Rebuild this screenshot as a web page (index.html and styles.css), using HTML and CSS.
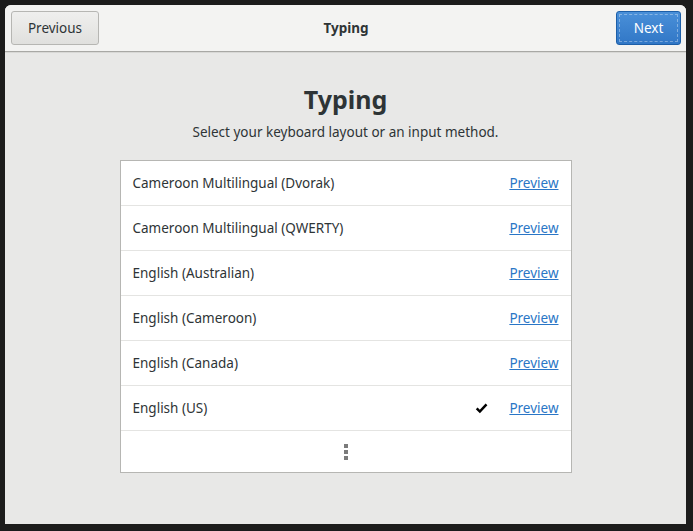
FILE: index.html
```html
<!DOCTYPE html>
<html>
<head>
<meta charset="utf-8">
<link rel="stylesheet" href="styles.css">
</head>
<body>
<div class="window">
  <header class="headerbar">
    <div class="hb-start"><button class="btn btn-prev">Previous</button></div>
    <div class="hb-title">Typing</div>
    <div class="hb-end"><button class="btn btn-suggested">Next</button></div>
  </header>
  <main class="content">
    <h1 class="title">Typing</h1>
    <p class="subtitle">Select your keyboard layout or an input method.</p>
    <ul class="list">
      <li class="row"><span class="name">Cameroon Multilingual (Dvorak)</span><a class="preview" href="#">Preview</a></li>
      <li class="row"><span class="name">Cameroon Multilingual (QWERTY)</span><a class="preview" href="#">Preview</a></li>
      <li class="row"><span class="name">English (Australian)</span><a class="preview" href="#">Preview</a></li>
      <li class="row"><span class="name">English (Cameroon)</span><a class="preview" href="#">Preview</a></li>
      <li class="row"><span class="name">English (Canada)</span><a class="preview" href="#">Preview</a></li>
      <li class="row"><span class="name">English (US)</span><svg class="check" width="13" height="11" viewBox="0 0 13 11"><path d="M0.8 6.2 L2.6 4.6 L4.8 6.8 L10.6 0.6 L12.4 2.2 L4.9 10.2 Z" fill="#000"/></svg><a class="preview" href="#">Preview</a></li>
      <li class="row more"><span class="dots"><i></i><i></i><i></i></span></li>
    </ul>
  </main>
</div>
</body>
</html>
```
FILE: styles.css
```css
html, body { margin: 0; padding: 0; }
body {
  background: #1c1c1c;
  width: 693px;
  height: 531px;
  padding: 5px 7px 7px 5px;
  box-sizing: border-box;
  font-family: "Noto Sans", "DejaVu Sans", sans-serif;
  color: #2e3436;
}
.window {
  width: 681px;
  height: 519px;
  background: #e8e8e7;
  border-radius: 6px 6px 0 0;
  overflow: hidden;
  display: flex;
  flex-direction: column;
}
.headerbar {
  height: 47px;
  box-sizing: border-box;
  background: #f3f3f2;
  border-bottom: 1px solid #a8a8a5;
  box-shadow: 0 1px 0 #d8d8d6;
  display: grid;
  grid-template-columns: 1fr auto 1fr;
  align-items: center;
  padding: 0 5px 0 6px;
}
.hb-end { justify-self: end; }
.btn {
  height: 34px;
  box-sizing: border-box;
  border: 1px solid #b6b6b3;
  border-radius: 3px;
  background: linear-gradient(#efefee, #e0e0de);
  font-family: inherit;
  font-size: 13.5px;
  color: #2e3436;
  padding: 0;
  display: block;
}
.btn-prev { width: 88px; }
.btn-suggested {
  width: 65px;
  background: linear-gradient(#4a90d9, #3177c6);
  border-color: #1d5fa8;
  color: #fff;
  outline: 1px dashed rgba(255,255,255,0.35);
  outline-offset: -4px;
}
.hb-title {
  font-size: 13.5px;
  font-weight: bold;
  color: #2e3436;
}
.content {
  flex: 1;
  display: flex;
  flex-direction: column;
  align-items: center;
}
.title {
  font-size: 25px;
  font-weight: bold;
  margin: 31px 0 0;
  line-height: 32px;
  color: #2e3436;
}
.subtitle {
  font-size: 13.5px;
  margin: 7px 0 0;
  line-height: 20px;
  color: #2e3436;
}
.list {
  list-style: none;
  margin: 18px 0 0;
  padding: 0;
  width: 452px;
  box-sizing: border-box;
  background: #fff;
  border: 1px solid #b6b6b3;
}
.row {
  height: 45px;
  box-sizing: border-box;
  border-bottom: 1px solid #e4e4e2;
  display: flex;
  align-items: center;
  padding: 0 12px;
  font-size: 13.5px;
  color: #2e3436;
}
.row .name { flex: 1; }
.check {
  margin-right: 21px;
  display: block;
}
.preview {
  color: #2a76c6;
  text-decoration: underline;
}
.row.more {
  height: 41px;
  border-bottom: none;
  justify-content: center;
}
.dots {
  display: flex;
  flex-direction: column;
  gap: 2px;
}
.dots i {
  display: block;
  width: 4px;
  height: 4px;
  background: #7b7b7b;
}
```
